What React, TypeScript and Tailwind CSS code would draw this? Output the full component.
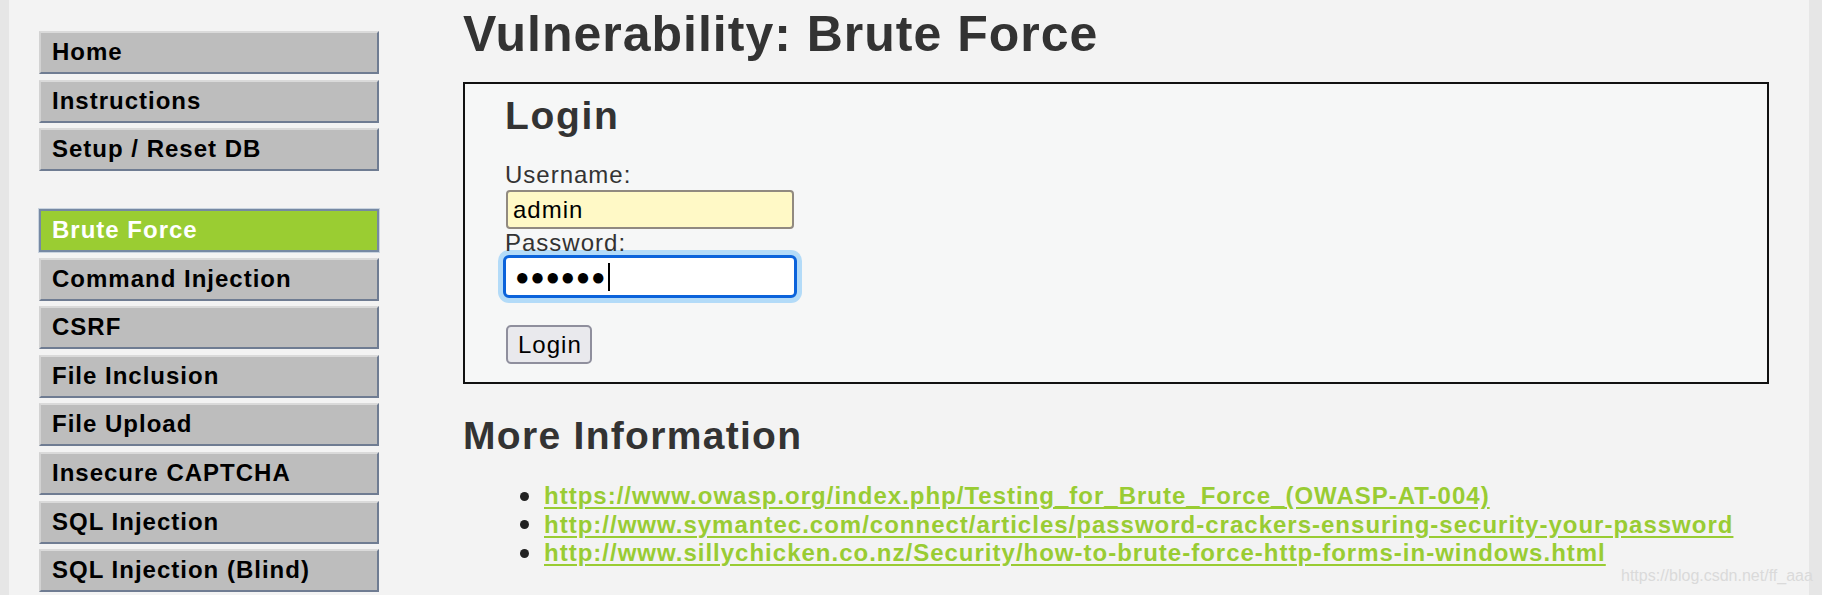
import React from "react";

const topMenu = ["Home", "Instructions", "Setup / Reset DB"];
const vulnMenu = [
  "Brute Force",
  "Command Injection",
  "CSRF",
  "File Inclusion",
  "File Upload",
  "Insecure CAPTCHA",
  "SQL Injection",
  "SQL Injection (Blind)",
];

const links = [
  "https://www.owasp.org/index.php/Testing_for_Brute_Force_(OWASP-AT-004)",
  "http://www.symantec.com/connect/articles/password-crackers-ensuring-security-your-password",
  "http://www.sillychicken.co.nz/Security/how-to-brute-force-http-forms-in-windows.html",
];

function MenuItem({ label, active }: { label: string; active?: boolean }) {
  if (active) {
    return (
      <a className="block h-[43px] w-[340px] border-2 border-[#7689a3] bg-[#9acd32] pl-[11px] pt-[5px] text-[24px] font-bold leading-[28px] text-white outline outline-1 outline-[#c9d3df]">
        {label}
      </a>
    );
  }
  return (
    <a className="block h-[43px] w-[340px] border-b-2 border-l-2 border-r-2 border-t-2 border-b-[#6f7c92] border-l-[#d2d2d2] border-r-[#6f7c92] border-t-[#dadada] bg-[#bdbdbd] pl-[11px] pt-[5px] text-[24px] font-bold leading-[28px] text-black">
      {label}
    </a>
  );
}

export default function App() {
  return (
    <div className="relative flex min-h-[595px] bg-[#e6e6e6] font-['Liberation_Sans',Arial,sans-serif] tracking-[1px]">
      <div className="ml-[9px] mr-[13px] flex flex-1 bg-[#f3f3f3]">
        {/* menu */}
        <nav className="w-[454px] shrink-0 pl-[30px] pt-[31px]">
          <div className="flex flex-col gap-[5.6px]">
            {topMenu.map((m) => (
              <MenuItem key={m} label={m} />
            ))}
          </div>
          <div className="mt-[37.8px] flex flex-col gap-[5.6px]">
            {vulnMenu.map((m, i) => (
              <MenuItem key={m} label={m} active={i === 0} />
            ))}
          </div>
        </nav>

        {/* body */}
        <main className="flex-1 pr-[40px] pt-[6px] text-[#333]">
          <h1 className="text-[50px] font-bold leading-[57px] tracking-[1px]">Vulnerability: Brute Force</h1>

          <div className="mt-[19px] border-2 border-[#111] bg-[#f6f7f7] pb-[18px] pl-[40px] pt-[10px]">
            <h2 className="text-[39px] font-bold leading-[44px] tracking-[1.7px]">Login</h2>

            <div className="mt-[23px] text-[24px] leading-[28px]">Username:</div>
            <input
              type="text"
              defaultValue="admin"
              className="ml-[1px] mt-[1px] block h-[39px] w-[288px] rounded-[4px] border-2 border-[#918a80] bg-[#fff9c6] px-[5px] text-[24px] text-black outline-none"
            />
            <div className="text-[24px] leading-[28px]">Password:</div>
            <div className="-ml-[2px] -mt-[2px] flex h-[43px] w-[294px] items-center rounded-[6px] border-[3px] border-[#0b63db] bg-white pl-[9px] shadow-[0_0_0_5px_#b3dbf8]">
              <span className="text-[24px] leading-none tracking-[0.7px] text-black">●●●●●●</span>
              <span className="ml-[2px] h-[28px] w-[2px] bg-black" />
            </div>

            <button className="ml-[1px] mt-[27px] block h-[39px] w-[86px] rounded-[5px] border-2 border-[#8f8f9d] bg-[#e9e9ed] pl-[10px] text-left text-[24px] leading-[28px] text-black">
              Login
            </button>
          </div>

          <h2 className="mt-[30px] text-[39px] font-bold leading-[44px] tracking-[1.3px]">More Information</h2>
          <ul className="mt-[24px] pl-[57px]">
            {links.map((l) => (
              <li key={l} className="flex items-center text-[24px] font-bold leading-[28.5px]">
                <span className="mr-[15px] inline-block h-[9px] w-[9px] shrink-0 rounded-full bg-[#222]" />
                <a className="text-[#99cc33] underline underline-offset-[3px]">{l}</a>
              </li>
            ))}
          </ul>
        </main>
      </div>

      <div className="absolute left-[1621px] top-[566px] text-[16px] leading-[20px] tracking-normal text-[#dadada]">
        https://blog.csdn.net/ff_aaa
      </div>
    </div>
  );
}
